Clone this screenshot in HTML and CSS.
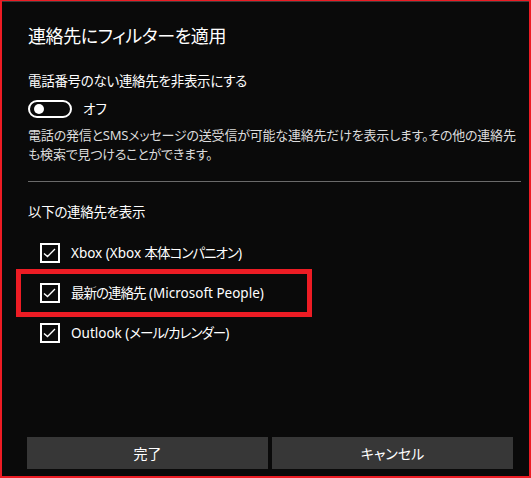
FILE: index.html
```html
<!DOCTYPE html>
<html lang="ja">
<head>
<meta charset="utf-8">
<link rel="stylesheet" href="styles.css">
</head>
<body>
<div class="dialog">
  <div class="topline"></div>
  <div class="content">
    <h1 class="title">連絡先にフィルターを適用</h1>
    <div class="subhead">電話番号のない連絡先を非表示にする</div>
    <div class="toggle-row">
      <span class="toggle"><span class="knob"></span></span>
      <span class="toggle-label">オフ</span>
    </div>
    <p class="desc">電話の発信とSMSメッセージの送受信が可能な連絡先だけを表示します。その他の連絡先<br>も検索で見つけることができます。</p>
    <div class="divider"></div>
    <div class="subhead section">以下の連絡先を表示</div>
    <ul class="checks">
      <li class="check-row">
        <span class="box"><svg viewBox="0 0 16 16" width="16" height="16"><path d="M2 8.5 L5.5 11.5 L13 4" fill="none" stroke="#fff" stroke-width="1.4"/></svg></span>
        <span class="label">Xbox (Xbox <span class="ja">本体コンパニオン</span>)</span>
      </li>
      <li class="check-row highlighted">
        <span class="box"><svg viewBox="0 0 16 16" width="16" height="16"><path d="M2 8.5 L5.5 11.5 L13 4" fill="none" stroke="#fff" stroke-width="1.4"/></svg></span>
        <span class="label"><span class="ja">最新の連絡先</span> (Microsoft People)</span>
        <span class="marker"></span>
      </li>
      <li class="check-row">
        <span class="box"><svg viewBox="0 0 16 16" width="16" height="16"><path d="M2 8.5 L5.5 11.5 L13 4" fill="none" stroke="#fff" stroke-width="1.4"/></svg></span>
        <span class="label">Outlook (<span class="ja">メール/カレンダー</span>)</span>
      </li>
    </ul>
    <div class="buttons">
      <button class="btn">完了</button>
      <button class="btn">キャンセル</button>
    </div>
  </div>
</div>
</body>
</html>
```
FILE: styles.css
```css
html, body {
  margin: 0;
  padding: 0;
  background: #0a0a0a;
}
body {
  font-family: "Noto Sans", "Noto Sans CJK JP", sans-serif;
  font-feature-settings: "palt";
  color: #fff;
}
.dialog {
  width: 531px;
  height: 478px;
  box-sizing: border-box;
  border-top: 1px solid #ed1c24;
  border-left: 2px solid #ed1c24;
  border-right: 2px solid #ed1c24;
  border-bottom: 2px solid #ed1c24;
  background: #0a0a0a;
  display: flex;
  flex-direction: column;
}
.topline {
  height: 1px;
  background: #3c3c3c;
  flex: none;
}
.content {
  flex: 1;
  display: flex;
  flex-direction: column;
  padding: 22px 8px 7px 26px;
}
.title {
  margin: 0;
  font-size: 18px;
  font-weight: 400;
  line-height: 24px;
  height: 24px;
  letter-spacing: -0.4px;
}
.subhead {
  margin-top: 23px;
  font-size: 13.5px;
  line-height: 20px;
  height: 20px;
  letter-spacing: -0.3px;
}
.toggle-row {
  margin-top: 8px;
  height: 20px;
  display: flex;
  align-items: center;
}
.toggle {
  width: 44px;
  height: 18px;
  box-sizing: border-box;
  border: 2px solid #fff;
  border-radius: 9px;
  display: flex;
  align-items: center;
  padding-left: 4px;
}
.knob {
  width: 10px;
  height: 10px;
  border-radius: 50%;
  background: #fff;
}
.toggle-label {
  margin-left: 11px;
  font-size: 13.5px;
  line-height: 20px;
}
.desc {
  margin: 7px 0 0;
  font-size: 13px;
  line-height: 19px;
  color: #dcdcdc;
  white-space: nowrap;
  letter-spacing: -0.2px;
}
.divider {
  margin-top: 17px;
  height: 1px;
  background: #6a6a6a;
}
.subhead.section {
  margin-top: 20px;
}
.checks {
  list-style: none;
  margin: 11px 0 0;
  padding: 0;
}
.check-row {
  height: 40px;
  display: flex;
  align-items: center;
  padding-left: 12px;
  position: relative;
}
.box {
  width: 20px;
  height: 20px;
  box-sizing: border-box;
  border: 2px solid #fff;
  display: flex;
  align-items: center;
  justify-content: center;
}
.box svg {
  display: block;
}
.label {
  margin-left: 11px;
  font-size: 13.5px;
  line-height: 20px;
}
.ja {
  letter-spacing: -1px;
}
.marker {
  position: absolute;
  left: -12px;
  top: -4px;
  width: 296px;
  height: 48px;
  box-sizing: border-box;
  border: 5px solid #ed1c24;
  pointer-events: none;
}
.buttons {
  margin-top: auto;
  margin-left: -1px;
  margin-right: 8px;
  display: grid;
  grid-template-columns: 1fr 1fr;
  gap: 4px;
}
.btn {
  height: 32px;
  border: none;
  background: #373737;
  color: #fff;
  font-family: "Noto Sans", "Noto Sans CJK JP", sans-serif;
  font-feature-settings: "palt";
  font-size: 14px;
  padding: 0;
}
```
